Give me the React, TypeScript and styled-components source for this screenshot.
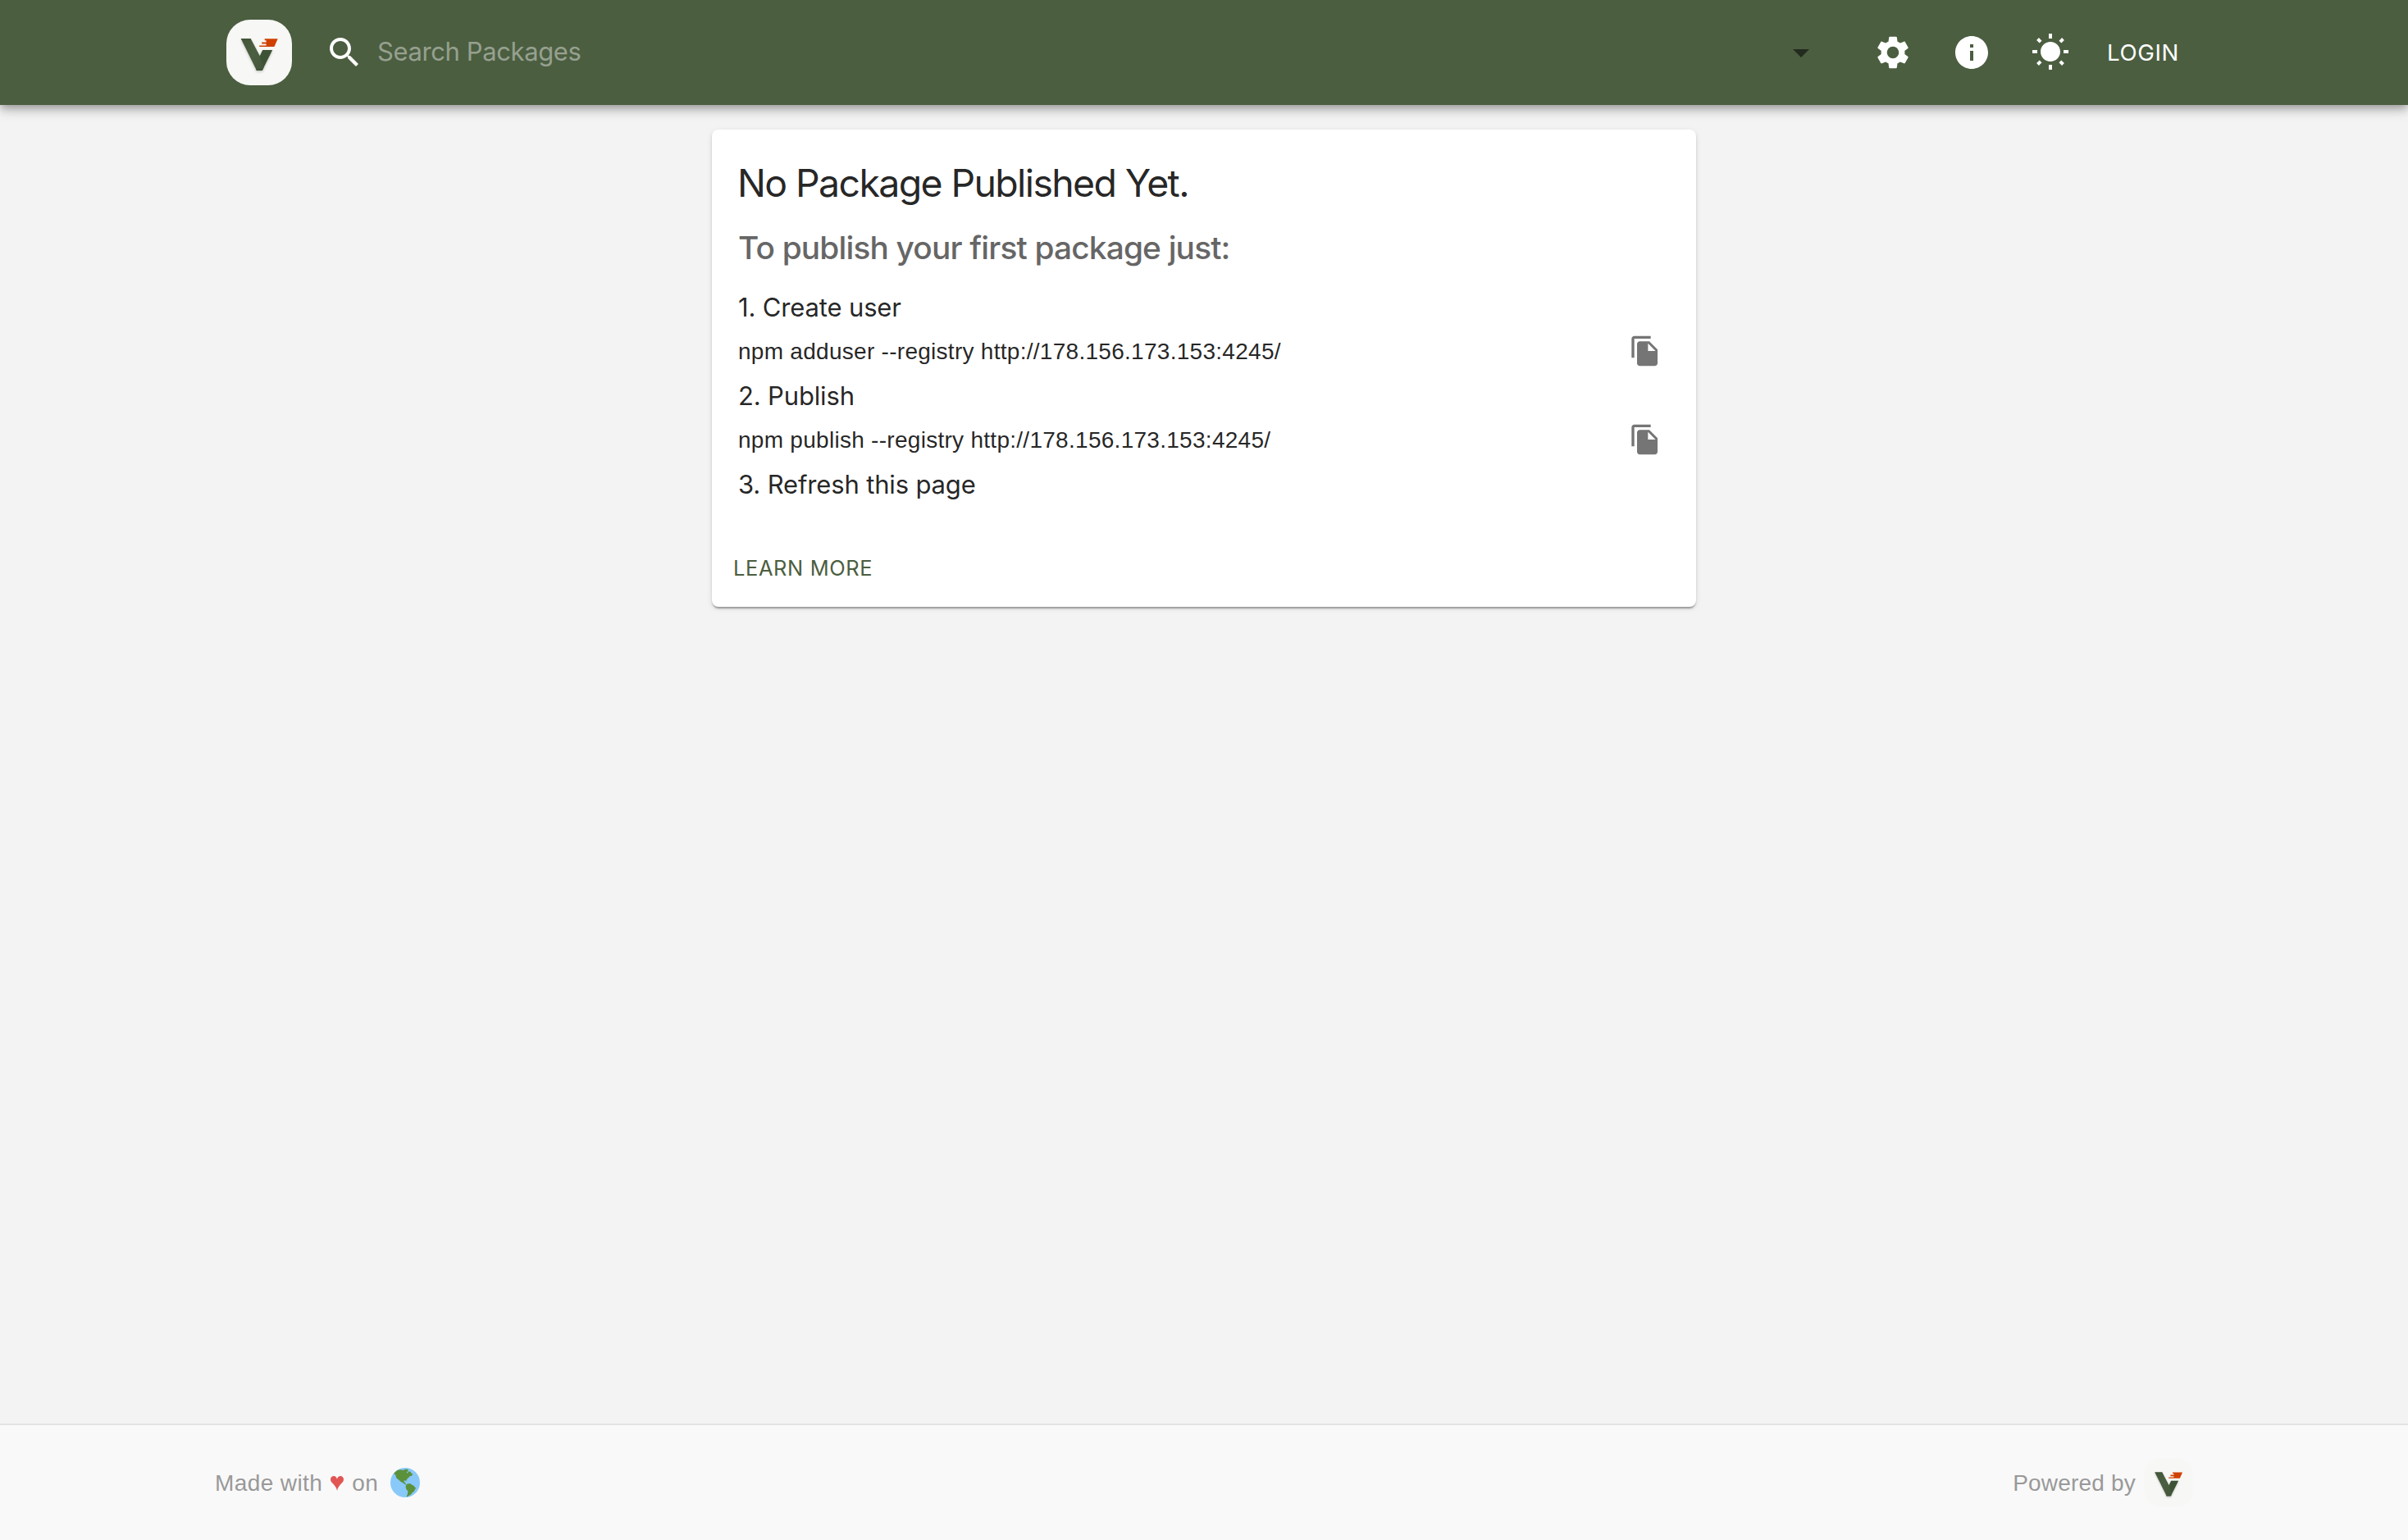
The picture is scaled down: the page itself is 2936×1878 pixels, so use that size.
import React from 'react';
import styled, { createGlobalStyle } from 'styled-components';

const sans = `Inter, Roboto, sans-serif`;
const helvetica = `"Liberation Sans", Arial, sans-serif`;
const green = '#4b5e40';

const GlobalStyle = createGlobalStyle`
  *, *::before, *::after { box-sizing: border-box; }
  body { margin: 0; background: #f3f3f3; color: rgba(0, 0, 0, 0.87); }
`;

const Page = styled.div`
  min-height: 100vh;
  display: flex;
  flex-direction: column;
  background: #f3f3f3;
`;

const Header = styled.header`
  height: 128px;
  flex: none;
  display: flex;
  align-items: center;
  padding: 0 262px 0 276px;
  background: ${green};
  color: #fff;
  box-shadow:
    0 4px 8px -2px rgba(0, 0, 0, 0.2),
    0 8px 10px rgba(0, 0, 0, 0.14),
    0 2px 20px rgba(0, 0, 0, 0.12);
`;

const Icon = styled.svg<{ $size?: number }>`
  display: block;
  flex: none;
  width: ${p => p.$size ?? 48}px;
  height: ${p => p.$size ?? 48}px;
  fill: currentColor;
`;

const Search = styled.label`
  flex: 1;
  display: flex;
  align-items: center;
  gap: 16px;
  margin-left: 40px;
`;

const SearchInput = styled.input`
  flex: 1;
  min-width: 0;
  height: 64px;
  padding: 0 0 3px;
  border: 0;
  outline: 0;
  background: transparent;
  color: #fff;
  font: 400 31px ${sans};
  letter-spacing: -0.39px;
  &::placeholder {
    color: #96a08f;
    opacity: 1;
  }
`;

const Caret = styled.span`
  color: #232b1e;
`;

const Actions = styled.nav`
  display: flex;
  align-items: center;
  width: 414px;
  margin-left: 40px;
`;

const IconButton = styled.button<{ $w?: number; $h?: number; $tone?: string }>`
  flex: none;
  width: ${p => p.$w ?? 96}px;
  height: ${p => p.$h ?? 96}px;
  display: flex;
  align-items: center;
  justify-content: center;
  padding: 0;
  border: 0;
  background: none;
  color: ${p => p.$tone ?? 'inherit'};
`;

const TextButton = styled.button<{ $size: number; $pad: number; $tone?: string }>`
  display: block;
  height: 60px;
  padding: 0 ${p => p.$pad}px;
  border: 0;
  background: none;
  color: ${p => p.$tone ?? 'inherit'};
  font: 400 ${p => p.$size}px/60px ${sans};
  letter-spacing: 0.65px;
  text-transform: uppercase;
`;

const Main = styled.main`
  flex: 1;
  display: flex;
  justify-content: center;
  align-items: flex-start;
  padding-top: 30px;
`;

const Card = styled.section`
  width: 1200px;
  height: 582px;
  display: flex;
  flex-direction: column;
  border-radius: 8px;
  background: #fff;
  box-shadow:
    0 4px 2px -2px rgba(0, 0, 0, 0.2),
    0 2px 2px rgba(0, 0, 0, 0.14),
    0 2px 6px rgba(0, 0, 0, 0.12);
`;

const CardContent = styled.div`
  flex: 1;
  padding: 33px 32px 0;
`;

const Title = styled.h1`
  margin: 0;
  font: 400 46.4px/64px ${sans};
  letter-spacing: -1.6px;
  text-indent: -1px;
`;

const Subtitle = styled.h2`
  margin: 15px 0 17px;
  color: #666;
  font: 500 38.8px/64px ${sans};
  letter-spacing: -0.81px;
`;

const Step = styled.p`
  margin: 0;
  font: 400 31px/48px ${sans};
  letter-spacing: -0.15px;
`;

const CommandRow = styled.div`
  height: 60px;
  display: flex;
  align-items: center;
  justify-content: space-between;
`;

const Command = styled.code`
  font: 400 28px/40px ${helvetica};
  letter-spacing: 0.28px;
`;

const CopyButton = styled(IconButton)`
  padding-bottom: 3px;
`;

const CardActions = styled.div`
  display: flex;
  padding: 0 6px 17px;
`;

const Footer = styled.footer`
  height: 142px;
  flex: none;
  display: flex;
  align-items: center;
  justify-content: space-between;
  padding: 0 262px;
  border-top: 2px solid #e3e3e3;
  background: #f9f9f9;
  color: #999;
  font: 400 28px/40px ${helvetica};
`;

const FooterGroup = styled.div`
  display: flex;
  align-items: center;
  gap: 10px;
`;

const FooterText = styled.span<{ $tracking?: number }>`
  padding-top: 2px;
  letter-spacing: ${p => p.$tracking ?? 0.4}px;
`;

const Heart = styled.svg`
  display: block;
  width: 16px;
  height: 18px;
  margin-top: 2px;
  fill: #e25555;
`;

const Globe = styled.svg`
  display: block;
  width: 36px;
  height: 36px;
  margin-left: 5px;
`;

function Logo({ size }: { size: number }) {
  return (
    <Icon $size={size} viewBox="0 0 80 80">
      <defs>
        <linearGradient id="arm" x1="0" y1="0" x2="1" y2="1">
          <stop offset="0" stopColor="#43563a" />
          <stop offset="0.5" stopColor="#4b5e40" />
          <stop offset="1" stopColor="#43563a" />
        </linearGradient>
        <filter id="soft" x="-20%" y="-20%" width="140%" height="150%">
          <feDropShadow dx="0" dy="1.5" stdDeviation="1.6" floodColor="#000" floodOpacity="0.22" />
        </filter>
      </defs>
      <rect width="80" height="80" rx="29" fill="#f7f7f5" />
      <g filter="url(#soft)">
        <path d="M44.2 37H56.2L43.8 61.8H36.8L37 52z" fill="#3e5236" />
        <path d="M17.8 23.3H29.8L40.8 44.3L45.5 58.4L43.8 61.8H36.8z" fill="url(#arm)" />
        <path d="M17.8 23.3H29.8V24.6H18.5zM36 60.5H44.4L43.8 61.8H36.8z" fill="#3a4c32" />
      </g>
      <path
        d="M46.7 23.3H62.7L58.4 33H40.2V31.4H48.6V29.6H43.2V27.4H48.6V25.2H46.7z"
        fill="#d04000"
      />
    </Icon>
  );
}

function CopyCommand({ text }: { text: string }) {
  return (
    <CommandRow>
      <Command>{text}</Command>
      <CopyButton $w={60} $h={60} $tone="#757575" aria-label="Copy to clipboard">
        <Icon $size={40} viewBox="0 0 24 24">
          <path d="M16 1H4c-1.1 0-2 .9-2 2v14h2V3h12zm-1 4 6 6v10c0 1.1-.9 2-2 2H7.99C6.89 23 6 22.1 6 21l.01-14c0-1.1.89-2 1.99-2zm-1 7h5.5L14 6.5z" />
        </Icon>
      </CopyButton>
    </CommandRow>
  );
}

export default function App() {
  return (
    <Page>
      <GlobalStyle />
      <Header>
        <Logo size={80} />
        <Search>
          <Icon viewBox="0 0 24 24">
            <path d="M15.5 14h-.79l-.28-.27C15.41 12.59 16 11.11 16 9.5 16 5.91 13.09 3 9.5 3S3 5.91 3 9.5 5.91 16 9.5 16c1.61 0 3.09-.59 4.23-1.57l.27.28v.79l5 4.99L20.49 19zm-6 0C7.01 14 5 11.99 5 9.5S7.01 5 9.5 5 14 7.01 14 9.5 11.99 14 9.5 14" />
          </Icon>
          <SearchInput placeholder="Search Packages" />
          <Caret>
            <Icon viewBox="0 0 24 24">
              <path d="m7 10 5 5 5-5z" />
            </Icon>
          </Caret>
        </Search>
        <Actions>
          <IconButton aria-label="Settings">
            <Icon viewBox="0 0 24 24">
              <path d="M19.14 12.94c.04-.3.06-.61.06-.94 0-.32-.02-.64-.07-.94l2.03-1.58c.18-.14.23-.41.12-.61l-1.92-3.32c-.12-.22-.37-.29-.59-.22l-2.39.96c-.5-.38-1.03-.7-1.62-.94l-.36-2.54c-.04-.24-.24-.41-.48-.41h-3.84c-.24 0-.43.17-.47.41l-.36 2.54c-.59.24-1.13.57-1.62.94l-2.39-.96c-.22-.08-.47 0-.59.22L2.74 8.87c-.12.21-.08.47.12.61l2.03 1.58c-.05.3-.09.63-.09.94s.02.64.07.94l-2.03 1.58c-.18.14-.23.41-.12.61l1.92 3.32c.12.22.37.29.59.22l2.39-.96c.5.38 1.03.7 1.62.94l.36 2.54c.05.24.24.41.48.41h3.84c.24 0 .44-.17.47-.41l.36-2.54c.59-.24 1.13-.56 1.62-.94l2.39.96c.22.08.47 0 .59-.22l1.92-3.32c.12-.22.07-.47-.12-.61zM12 15.6c-1.98 0-3.6-1.62-3.6-3.6s1.62-3.6 3.6-3.6 3.6 1.62 3.6 3.6-1.62 3.6-3.6 3.6" />
            </Icon>
          </IconButton>
          <IconButton aria-label="Information">
            <Icon viewBox="0 0 24 24">
              <path d="M12 2C6.48 2 2 6.48 2 12s4.48 10 10 10 10-4.48 10-10S17.52 2 12 2m1 15h-2v-6h2zm0-8h-2V7h2z" />
            </Icon>
          </IconButton>
          <IconButton aria-label="Switch theme">
            <Icon viewBox="0 0 24 24">
              <path d="m6.76 4.84-1.8-1.79-1.41 1.41 1.79 1.79zM4 10.5H1v2h3zm9-9.95h-2V3.5h2zm7.45 3.91-1.41-1.41-1.79 1.79 1.41 1.41zm-3.21 13.7 1.79 1.8 1.41-1.41-1.8-1.79zM20 10.5v2h3v-2zm-8-5c-3.31 0-6 2.69-6 6s2.69 6 6 6 6-2.69 6-6-2.69-6-6-6m-1 16.95h2V19.5h-2zm-7.45-3.91 1.41 1.41 1.79-1.8-1.41-1.41z" />
            </Icon>
          </IconButton>
          <TextButton $size={27.6} $pad={21}>Login</TextButton>
        </Actions>
      </Header>

      <Main>
        <Card>
          <CardContent>
            <Title>No Package Published Yet.</Title>
            <Subtitle>To publish your first package just:</Subtitle>
            <Step>1. Create user</Step>
            <CopyCommand text="npm adduser --registry http://178.156.173.153:4245/" />
            <Step>2. Publish</Step>
            <CopyCommand text="npm publish --registry http://178.156.173.153:4245/" />
            <Step>3. Refresh this page</Step>
          </CardContent>
          <CardActions>
            <TextButton $size={25.4} $pad={20} $tone={green}>Learn more</TextButton>
          </CardActions>
        </Card>
      </Main>

      <Footer>
        <FooterGroup>
          <FooterText>Made with</FooterText>
          <Heart viewBox="0 0 16 18">
            <path d="M8 18C7.4 14.5 5.6 12.3 3.2 9.6C1.4 7.6 0 6.5 0 4C0 1.7 1.7 0 3.9 0C6 0 7.5 1.4 8 3.7C8.5 1.4 10 0 12.1 0C14.3 0 16 1.7 16 4C16 6.500 14.6 7.6 12.8 9.6C10.4 12.3 8.6 14.5 8 18z" />
          </Heart>
          <FooterText>on</FooterText>
          <Globe viewBox="0 0 36 36">
            <circle cx="18" cy="18" r="18" fill="#88c9f9" />
            <path
              fill="#5c913b"
              d="M4 7.2L6.5 4.5L9 2.8L13 2.3L15 3L18 1.8L21.2 1.7L21.9 3L21 4.5L19.5 5.8L20.5 6.5L22.5 4.2L24.5 4.8L25.5 6.5L27.3 7.7L26 9.8L23.5 10.2L22.5 11.7L20.7 13.3L19.6 15L19.4 17L18.6 15.4L16.8 15.6L16.3 17.6L18 17.5L18.3 19.3L20 21L18.3 20.6L15.5 18.5L12.5 16.8L9.7 14.3L7 12L6.5 9L5 7.6z"
            />
            <path
              fill="#5c913b"
              d="M19.5 20.3L21.5 19.2L24.5 19.3L26.5 21L29 22L29.5 23.5L31.3 24.4L30 26.3L29 28.5L26.5 30.5L25 32.5L22.5 34L20.3 35.6L20 34L21 31.5L21.4 28.6L19.6 26.5L18.5 23.5z"
            />
          </Globe>
        </FooterGroup>
        <FooterGroup>
          <FooterText $tracking={0.2}>Powered by</FooterText>
          <Logo size={60} />
        </FooterGroup>
      </Footer>
    </Page>
  );
}
